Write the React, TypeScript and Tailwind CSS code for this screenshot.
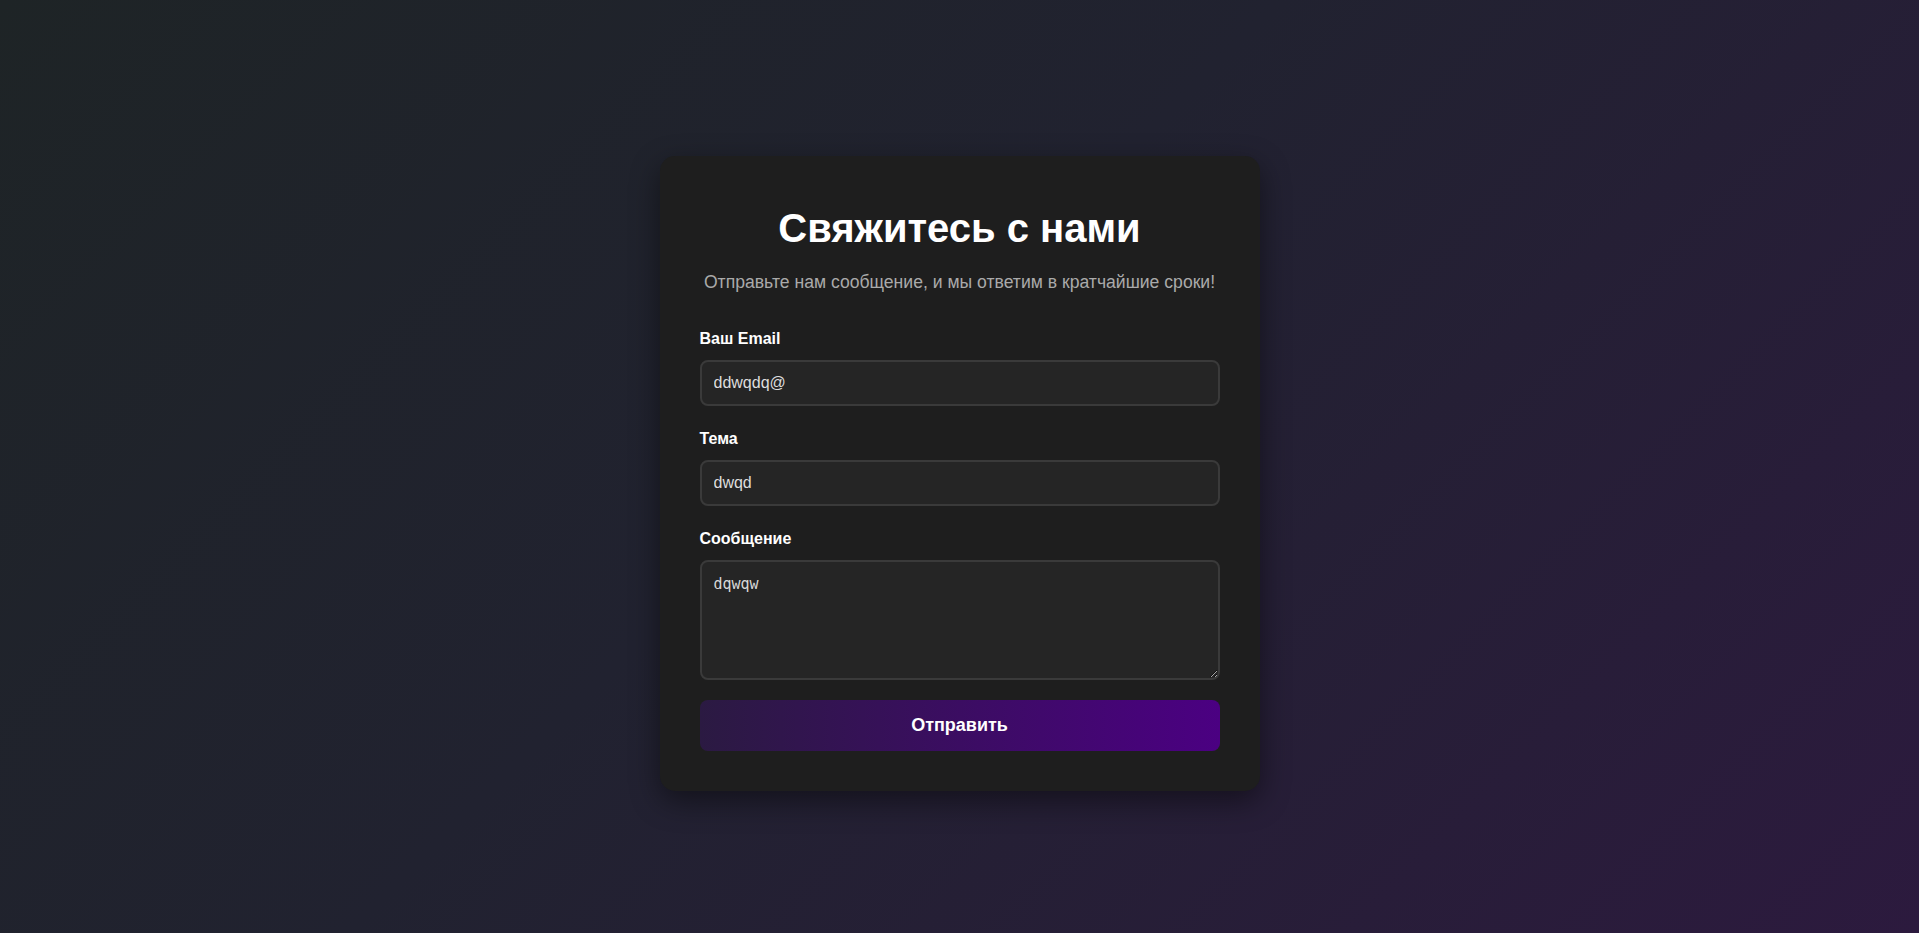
import React from "react";

export default function App() {
  return (
    <div
      className="min-h-screen w-full flex items-center justify-center pt-[13px] bg-[linear-gradient(135deg,#1e2426_0%,#212230_45%,#2c1a3e_100%)]"
      style={{ fontFamily: '"Liberation Sans", Arial, sans-serif' }}
    >
      <div className="w-[600px] bg-[#1e1e1e] rounded-[15px] px-10 pt-10 pb-10 shadow-[0_10px_30px_rgba(0,0,0,0.45)]">
        <h1 className="mt-[9px] text-center text-[40px] leading-[46px] font-bold text-white">
          Свяжитесь с нами
        </h1>
        <p className="mt-[21px] text-center text-[17.6px] leading-[21px] whitespace-nowrap text-[#aaaaaa]">
          Отправьте нам сообщение, и мы ответим в кратчайшие сроки!
        </p>
        <form className="mt-[37px]" onSubmit={(e) => e.preventDefault()}>
          <div className="mb-6">
            <label className="block mb-3 text-[16px] leading-[18px] font-bold text-white">
              Ваш Email
            </label>
            <input
              type="text"
              defaultValue="ddwqdq@"
              className="w-full h-[46px] px-3 rounded-lg border-2 border-[#3a3a3a] bg-[#252525] text-[16px] text-[#dddddd] outline-none"
            />
          </div>
          <div className="mb-6">
            <label className="block mb-3 text-[16px] leading-[18px] font-bold text-white">
              Тема
            </label>
            <input
              type="text"
              defaultValue="dwqd"
              className="w-full h-[46px] px-3 rounded-lg border-2 border-[#3a3a3a] bg-[#252525] text-[16px] text-[#dddddd] outline-none"
            />
          </div>
          <div className="mb-[20px]">
            <label className="block mb-3 text-[16px] leading-[18px] font-bold text-white">
              Сообщение
            </label>
            <textarea
              defaultValue="dqwqw"
              className="block w-full h-[120px] px-3 py-[13px] rounded-lg border-2 border-[#3a3a3a] bg-[#252525] text-[15px] leading-[18px] text-[#d8d8d8] outline-none resize-y"
              style={{ fontFamily: '"DejaVu Sans Mono", monospace' }}
            />
          </div>
          <button
            type="submit"
            className="w-full h-[51px] rounded-lg bg-[linear-gradient(90deg,#2b1a42_0%,#4b0082_100%)] text-white text-[18px] font-bold"
          >
            Отправить
          </button>
        </form>
      </div>
    </div>
  );
}
